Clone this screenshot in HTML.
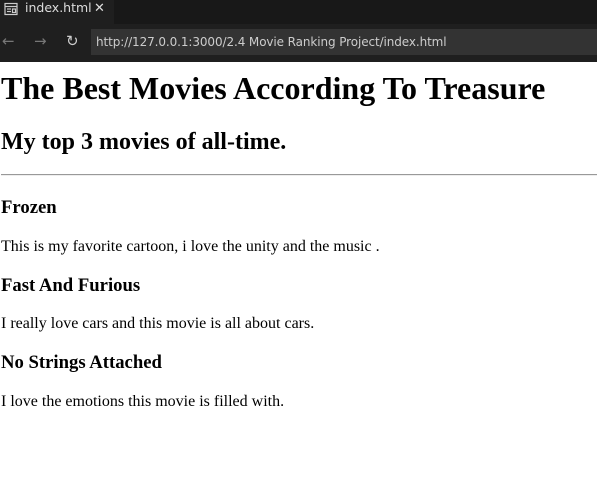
<!DOCTYPE html>
<html><head><style>
body{margin:0;width:597px;height:495px;background:#fff;position:relative;overflow:hidden;font-family:"Liberation Serif",serif;color:#000}
.tabbar{position:absolute;left:0;top:0;width:597px;height:24px;background:#181818}
.tab{position:absolute;left:0;top:0;width:114px;height:24px;background:#1f1f1f;color:#ddd;font:12.5px "DejaVu Sans",sans-serif}
.tool{position:absolute;left:0;top:24px;width:597px;height:38px;background:#1f1f1f}
.url{position:absolute;left:91px;top:5px;width:506px;height:26px;background:#333;color:#ccc;font:12px "DejaVu Sans",sans-serif;line-height:26px;padding-left:5px;box-sizing:border-box;letter-spacing:-0.1px}
.t{position:absolute;left:1px;white-space:nowrap;font-weight:bold}
p.t{font-weight:normal;font-size:16px;margin:0;line-height:20px}
</style></head><body>
<div class="tabbar"><div class="tab">
<svg style="position:absolute;left:4px;top:2px" width="14" height="14" viewBox="0 0 14 14" fill="none" stroke="#ccc" stroke-width="1.2"><rect x="1" y="1.5" width="12" height="11"/><line x1="1" y1="4.5" x2="13" y2="4.5"/><line x1="3" y1="7" x2="7" y2="7"/><line x1="3" y1="9.5" x2="7" y2="9.5"/><rect x="8.5" y="7" width="3" height="3.5"/></svg>
<span style="position:absolute;left:25px;top:0;line-height:15px">index.html</span>
<span style="position:absolute;left:94px;top:0;line-height:17px;font-size:13px">✕</span></div></div>
<div class="tool">
<span style="position:absolute;left:2px;top:8px;color:#777;font:15px 'DejaVu Sans'">←</span>
<span style="position:absolute;left:34px;top:8px;color:#777;font:15px 'DejaVu Sans'">→</span>
<span style="position:absolute;left:66px;top:8px;color:#ccc;font:15px 'DejaVu Sans'">↻</span>
<div class="url">http://127.0.0.1:3000/2.4 Movie Ranking Project/index.html</div></div>
<div class="t" style="top:69px;font-size:32px;line-height:38px">The Best Movies According To Treasure</div>
<div class="t" style="top:128px;font-size:24px;line-height:28px">My top 3 movies of all-time.</div>
<div style="position:absolute;left:1px;top:174px;width:596px;border-top:1px solid #999;border-bottom:1px solid #eee"></div>
<div class="t" style="top:197px;font-size:18.7px;line-height:22px">Frozen</div>
<p class="t" style="top:237px">This is my favorite cartoon, i love the unity and the music .</p>
<div class="t" style="top:275px;font-size:18.7px;line-height:22px">Fast And Furious</div>
<p class="t" style="top:314px">I really love cars and this movie is all about cars.</p>
<div class="t" style="top:352px;font-size:18.7px;line-height:22px">No Strings Attached</div>
<p class="t" style="top:392px">I love the emotions this movie is filled with.</p>
</body></html>
